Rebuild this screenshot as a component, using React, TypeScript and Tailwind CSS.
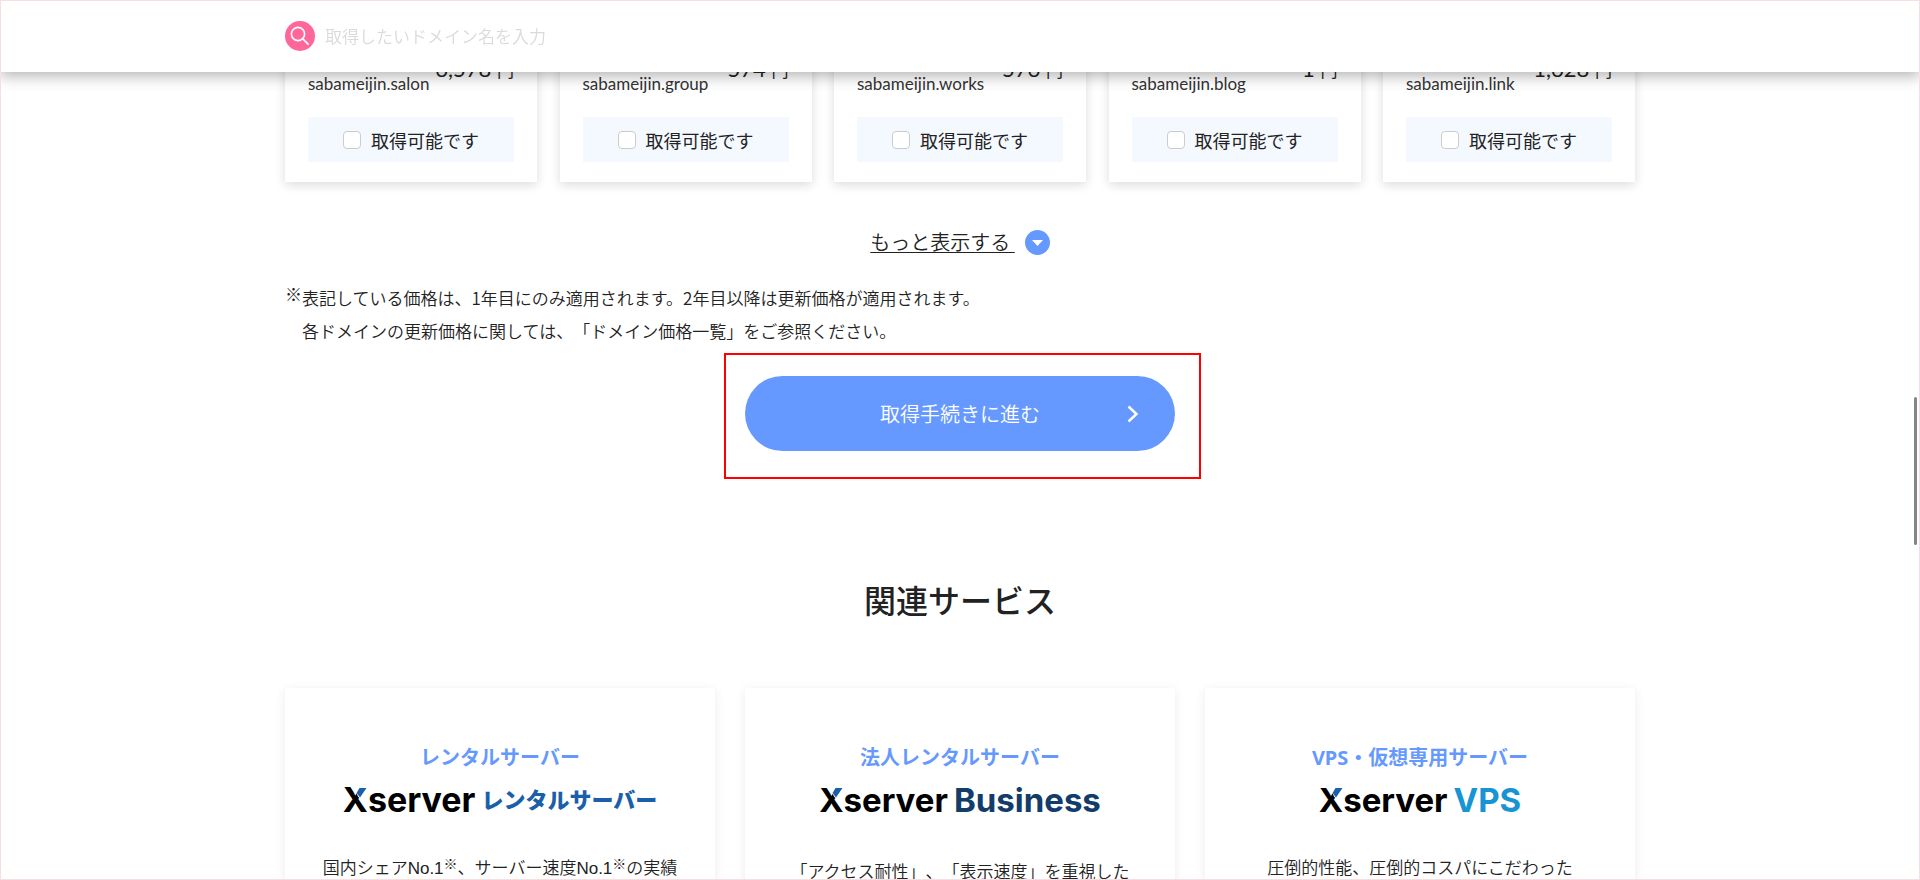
import * as React from "react";

interface Domain {
  name: string;
  price: string;
}

interface Service {
  label: string;
  product: string;
  productClass: string;
  logoClass: string;
  href: string;
  description: React.ReactNode;
}

const domains: Domain[] = [
  { name: "sabameijin.salon", price: "6,578" },
  { name: "sabameijin.group", price: "574" },
  { name: "sabameijin.works", price: "576" },
  { name: "sabameijin.blog", price: "1" },
  { name: "sabameijin.link", price: "1,628" },
];

const services: Service[] = [
  {
    label: "レンタルサーバー",
    product: "レンタルサーバー",
    productClass: "text-[22px] font-black text-[#1b5faa]",
    logoClass: "h-10 text-[34px]",
    href: "#rental",
    description: (
      <>
        国内シェアNo.1<Note />、サーバー速度No.1<Note />の実績
      </>
    ),
  },
  {
    label: "法人レンタルサーバー",
    product: "Business",
    productClass: "font-bold text-[#123c69]",
    logoClass: "h-11 pb-1 text-[33px]",
    href: "#business",
    description: "「アクセス耐性」、「表示速度」を重視した",
  },
  {
    label: "VPS・仮想専用サーバー",
    product: "VPS",
    productClass: "font-bold text-[#1894d4]",
    logoClass: "h-10 text-[33px]",
    href: "#vps",
    description: "圧倒的性能、圧倒的コスパにこだわった",
  },
];

function Note() {
  return <span className="align-[5px] text-[14px] leading-none">※</span>;
}

function Header() {
  return (
    <header className="fixed inset-x-0 top-0 z-10 h-[72px] bg-white shadow-[0_4px_14px_rgba(0,0,0,0.3)]">
      <form
        className="mx-auto flex h-full max-w-[1350px] items-center gap-[10px]"
        onSubmit={(e) => e.preventDefault()}
      >
        <button
          type="submit"
          aria-label="検索"
          className="flex h-[30px] w-[30px] items-center justify-center rounded-full bg-[#ff6699]"
        >
          <svg viewBox="0 0 30 30" className="h-[30px] w-[30px]" fill="none" stroke="#fff" aria-hidden>
            <circle cx="13" cy="13" r="6.6" strokeWidth="1.6" />
            <path d="M17.8 17.8L23.6 23.6" strokeWidth="1.8" />
          </svg>
        </button>
        <input
          type="text"
          aria-label="ドメイン名"
          placeholder="取得したいドメイン名を入力"
          className="w-[600px] bg-transparent text-[17px] font-[350] outline-none placeholder:text-[#dadada]"
        />
      </form>
    </header>
  );
}

function DomainCard({ name, price }: Domain) {
  return (
    <li className="w-[252px] bg-white px-[23px] pb-5 pt-[57px] shadow-[0_3px_10px_rgba(0,0,0,0.14)]">
      <div className="flex h-10 items-start justify-between">
        <p className="pt-[15px] font-[Lato,'Noto_Sans_CJK_JP',sans-serif] text-[17px] leading-6 text-[#333]">
          {name}
        </p>
        <p className="font-[Lato,'Noto_Sans_CJK_JP',sans-serif] text-[22px] leading-6">
          {price} <span className="text-[17px]">円</span>
        </p>
      </div>
      <label className="mt-5 flex h-[45px] items-center justify-center gap-[10px] bg-[#f4f8ff] text-lg">
        <input
          type="checkbox"
          className="h-[18px] w-[18px] appearance-none rounded border border-[#ccc] bg-white checked:bg-[#6699ff]"
        />
        取得可能です
      </label>
    </li>
  );
}

function ServiceCard({ label, product, productClass, logoClass, href, description }: Service) {
  return (
    <li className="flex h-[400px] flex-1 flex-col items-center bg-white pt-[54px] shadow-[0_2px_10px_rgba(0,0,0,0.08)]">
      <h3 className="font-['Noto_Sans','Noto_Sans_CJK_JP',sans-serif] text-xl font-bold leading-8 text-[#6699ff]">
        {label}
      </h3>
      <a
        href={href}
        className={`mt-[6px] flex items-center gap-[6px] whitespace-nowrap font-[Inter,'Noto_Sans_CJK_JP',sans-serif] leading-10 ${logoClass}`}
      >
        <span className="relative font-bold text-black">
          Xserver
          <svg viewBox="0 0 24 25" className="absolute left-0 top-2 h-[25px] w-6 overflow-visible" aria-hidden>
            <path d="M10.5 -1H25V4L17.5 11L15 8.5Z" fill="#fff" />
            <path d="M16.5 0H23.5L17 9.5L13.6 5Z" fill="#1b5faa" />
          </svg>
        </span>
        <span className={productClass}>{product}</span>
      </a>
      <p className="mt-[31px] font-['Liberation_Sans','Noto_Sans_CJK_JP',sans-serif] text-[17px] font-[350] leading-9 [text-spacing-trim:space-all]">
        {description}
      </p>
    </li>
  );
}

export default function App() {
  return (
    <div className="h-screen overflow-hidden bg-white font-['Noto_Sans_CJK_JP',sans-serif] text-[#222]">
      <Header />
      <main className="mx-auto max-w-[1350px]">
        <ul className="flex justify-between">
          {domains.map((d) => (
            <DomainCard key={d.name} {...d} />
          ))}
        </ul>

        <div className="mt-[42px] flex justify-center">
          <button type="button" className="flex items-center gap-[10px] text-xl font-[350] leading-9">
            <span className="whitespace-pre underline decoration-1 underline-offset-2">もっと表示する </span>
            <svg viewBox="0 0 25 25" className="h-[25px] w-[25px]" aria-hidden>
              <circle cx="12.5" cy="12.5" r="12.5" fill="#6699ff" />
              <path d="M7 10H18L12.5 16Z" fill="#fff" />
            </svg>
          </button>
        </div>

        <div className="mt-[21px] flex text-[17px] font-[350] leading-[33px] [text-spacing-trim:space-all]">
          <span className="-mt-1">※</span>
          <p>
            表記している価格は、1年目にのみ適用されます。2年目以降は更新価格が適用されます。
            <br />
            各ドメインの更新価格に関しては、「ドメイン価格一覧」をご参照ください。
          </p>
        </div>

        <div className="relative mx-auto mt-[29px] w-[430px]">
          <button
            type="button"
            className="relative flex h-[75px] w-full items-center justify-center rounded-full bg-[#6699ff] text-xl font-[350] text-white"
          >
            取得手続きに進む
            <svg
              viewBox="0 0 12 18"
              className="absolute right-9 h-[18px] w-3"
              fill="none"
              stroke="#fff"
              strokeWidth="2.4"
              aria-hidden
            >
              <path d="M1.5 1.5L9.5 9L1.5 16.5" />
            </svg>
          </button>
          <div className="pointer-events-none absolute -bottom-7 -left-[21px] -right-[26px] -top-[23px] border-2 border-[#f00]" />
        </div>

        <h2 className="mt-[124px] text-center text-[32px] font-medium leading-[48px]">関連サービス</h2>

        <ul className="mt-[65px] flex gap-[30px]">
          {services.map((s) => (
            <ServiceCard key={s.label} {...s} />
          ))}
        </ul>
      </main>

      <div className="pointer-events-none fixed right-[3px] top-[397px] z-20 h-[148px] w-[3px] rounded-full bg-[#858589]" />
      <div className="pointer-events-none fixed inset-0 z-20 border border-[#fbdcdf]" />
    </div>
  );
}
